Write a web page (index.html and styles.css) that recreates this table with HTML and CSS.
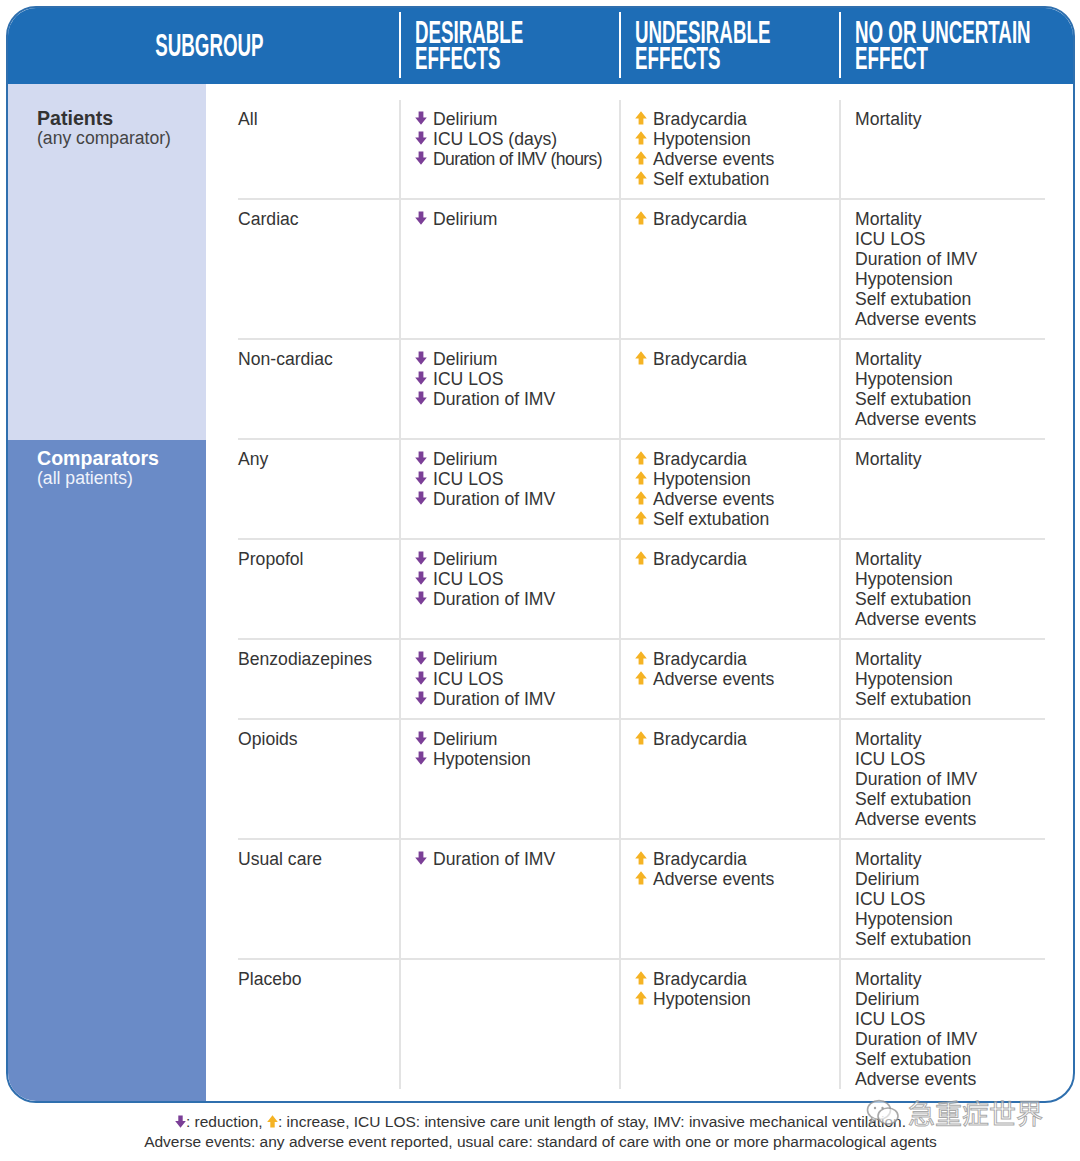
FILE: index.html
```html
<!DOCTYPE html>
<html lang="en">
<head>
<meta charset="utf-8">
<title>Subgroup effects</title>
<link rel="stylesheet" href="styles.css">
</head>
<body>
<svg class="defs" width="0" height="0" aria-hidden="true">
  <defs>
    <symbol id="dn" viewBox="0 0 12 14"><path d="M3.6 0.5h4.8v6h3.4L6 13.8 0.2 6.5h3.4z"/></symbol>
    <symbol id="up" viewBox="0 0 12 14"><path d="M6 0.2l5.8 7.3H8.4v6H3.6v-6H0.2z"/></symbol>
  </defs>
</svg>
<div class="page">
  <div class="table">
    <div class="head">
      <div class="hcell hsub"><span class="htxt hc">SUBGROUP</span></div>
      <div class="hcell"><span class="htxt">DESIRABLE</span><span class="htxt">EFFECTS</span></div>
      <div class="hcell"><span class="htxt">UNDESIRABLE</span><span class="htxt">EFFECTS</span></div>
      <div class="hcell"><span class="htxt">NO OR UNCERTAIN</span><span class="htxt">EFFECT</span></div>
    </div>

    <div class="group g-pat">
      <div class="glabel"><b>Patients</b><span>(any comparator)</span></div>
      <div class="rows">
        <div class="row">
          <div class="c sub">All</div>
          <div class="c">
            <div class="it"><svg class="ar dn"><use href="#dn"/></svg>Delirium</div>
            <div class="it"><svg class="ar dn"><use href="#dn"/></svg>ICU LOS (days)</div>
            <div class="it tight"><svg class="ar dn"><use href="#dn"/></svg>Duration of IMV (hours)</div>
          </div>
          <div class="c">
            <div class="it"><svg class="ar up"><use href="#up"/></svg>Bradycardia</div>
            <div class="it"><svg class="ar up"><use href="#up"/></svg>Hypotension</div>
            <div class="it"><svg class="ar up"><use href="#up"/></svg>Adverse events</div>
            <div class="it"><svg class="ar up"><use href="#up"/></svg>Self extubation</div>
          </div>
          <div class="c">
            <div>Mortality</div>
          </div>
        </div>
        <div class="row">
          <div class="c sub">Cardiac</div>
          <div class="c">
            <div class="it"><svg class="ar dn"><use href="#dn"/></svg>Delirium</div>
          </div>
          <div class="c">
            <div class="it"><svg class="ar up"><use href="#up"/></svg>Bradycardia</div>
          </div>
          <div class="c">
            <div>Mortality</div>
            <div>ICU LOS</div>
            <div>Duration of IMV</div>
            <div>Hypotension</div>
            <div>Self extubation</div>
            <div>Adverse events</div>
          </div>
        </div>
        <div class="row">
          <div class="c sub">Non-cardiac</div>
          <div class="c">
            <div class="it"><svg class="ar dn"><use href="#dn"/></svg>Delirium</div>
            <div class="it"><svg class="ar dn"><use href="#dn"/></svg>ICU LOS</div>
            <div class="it"><svg class="ar dn"><use href="#dn"/></svg>Duration of IMV</div>
          </div>
          <div class="c">
            <div class="it"><svg class="ar up"><use href="#up"/></svg>Bradycardia</div>
          </div>
          <div class="c">
            <div>Mortality</div>
            <div>Hypotension</div>
            <div>Self extubation</div>
            <div>Adverse events</div>
          </div>
        </div>
      </div>
    </div>

    <div class="group g-cmp">
      <div class="glabel"><b>Comparators</b><span>(all patients)</span></div>
      <div class="rows">
        <div class="row">
          <div class="c sub">Any</div>
          <div class="c">
            <div class="it"><svg class="ar dn"><use href="#dn"/></svg>Delirium</div>
            <div class="it"><svg class="ar dn"><use href="#dn"/></svg>ICU LOS</div>
            <div class="it"><svg class="ar dn"><use href="#dn"/></svg>Duration of IMV</div>
          </div>
          <div class="c">
            <div class="it"><svg class="ar up"><use href="#up"/></svg>Bradycardia</div>
            <div class="it"><svg class="ar up"><use href="#up"/></svg>Hypotension</div>
            <div class="it"><svg class="ar up"><use href="#up"/></svg>Adverse events</div>
            <div class="it"><svg class="ar up"><use href="#up"/></svg>Self extubation</div>
          </div>
          <div class="c">
            <div>Mortality</div>
          </div>
        </div>
        <div class="row">
          <div class="c sub">Propofol</div>
          <div class="c">
            <div class="it"><svg class="ar dn"><use href="#dn"/></svg>Delirium</div>
            <div class="it"><svg class="ar dn"><use href="#dn"/></svg>ICU LOS</div>
            <div class="it"><svg class="ar dn"><use href="#dn"/></svg>Duration of IMV</div>
          </div>
          <div class="c">
            <div class="it"><svg class="ar up"><use href="#up"/></svg>Bradycardia</div>
          </div>
          <div class="c">
            <div>Mortality</div>
            <div>Hypotension</div>
            <div>Self extubation</div>
            <div>Adverse events</div>
          </div>
        </div>
        <div class="row">
          <div class="c sub">Benzodiazepines</div>
          <div class="c">
            <div class="it"><svg class="ar dn"><use href="#dn"/></svg>Delirium</div>
            <div class="it"><svg class="ar dn"><use href="#dn"/></svg>ICU LOS</div>
            <div class="it"><svg class="ar dn"><use href="#dn"/></svg>Duration of IMV</div>
          </div>
          <div class="c">
            <div class="it"><svg class="ar up"><use href="#up"/></svg>Bradycardia</div>
            <div class="it"><svg class="ar up"><use href="#up"/></svg>Adverse events</div>
          </div>
          <div class="c">
            <div>Mortality</div>
            <div>Hypotension</div>
            <div>Self extubation</div>
          </div>
        </div>
        <div class="row">
          <div class="c sub">Opioids</div>
          <div class="c">
            <div class="it"><svg class="ar dn"><use href="#dn"/></svg>Delirium</div>
            <div class="it"><svg class="ar dn"><use href="#dn"/></svg>Hypotension</div>
          </div>
          <div class="c">
            <div class="it"><svg class="ar up"><use href="#up"/></svg>Bradycardia</div>
          </div>
          <div class="c">
            <div>Mortality</div>
            <div>ICU LOS</div>
            <div>Duration of IMV</div>
            <div>Self extubation</div>
            <div>Adverse events</div>
          </div>
        </div>
        <div class="row">
          <div class="c sub">Usual care</div>
          <div class="c">
            <div class="it"><svg class="ar dn"><use href="#dn"/></svg>Duration of IMV</div>
          </div>
          <div class="c">
            <div class="it"><svg class="ar up"><use href="#up"/></svg>Bradycardia</div>
            <div class="it"><svg class="ar up"><use href="#up"/></svg>Adverse events</div>
          </div>
          <div class="c">
            <div>Mortality</div>
            <div>Delirium</div>
            <div>ICU LOS</div>
            <div>Hypotension</div>
            <div>Self extubation</div>
          </div>
        </div>
        <div class="row">
          <div class="c sub">Placebo</div>
          <div class="c"></div>
          <div class="c">
            <div class="it"><svg class="ar up"><use href="#up"/></svg>Bradycardia</div>
            <div class="it"><svg class="ar up"><use href="#up"/></svg>Hypotension</div>
          </div>
          <div class="c">
            <div>Mortality</div>
            <div>Delirium</div>
            <div>ICU LOS</div>
            <div>Duration of IMV</div>
            <div>Self extubation</div>
            <div>Adverse events</div>
          </div>
        </div>
      </div>
    </div>
  </div>

  <div class="foot">
    <p><svg class="far dn"><use href="#dn"/></svg>: reduction, <svg class="far up"><use href="#up"/></svg>: increase, ICU LOS: intensive care unit length of stay, IMV: invasive mechanical ventilation.</p>
    <p>Adverse events: any adverse event reported, usual care: standard of care with one or more pharmacological agents</p>
  </div>

  <div class="wm">
    <svg class="wm-ico" viewBox="0 0 34 30" aria-hidden="true">
      <ellipse cx="13" cy="12" rx="11.5" ry="9.5"/>
      <path d="M6 19.5 4.5 25l5.5-3.4"/>
      <ellipse cx="22" cy="18" rx="10" ry="8"/>
      <circle cx="9" cy="10" r="1.2" class="dot"/>
      <circle cx="16.5" cy="10" r="1.2" class="dot"/>
    </svg>
    <span class="wm-txt">急重症世界</span>
  </div>
</div>
</body>
</html>
```

FILE: styles.css
```css
* {
  box-sizing: border-box;
  margin: 0;
  padding: 0;
}

body {
  margin: 0;
  background: #ffffff;
  font-family: "Liberation Sans", Arial, sans-serif;
  color: #333333;
}

.defs {
  position: absolute;
  width: 0;
  height: 0;
}

.page {
  position: relative;
  width: 1080px;
  padding: 6px 5px 0 6px;
}

.table {
  width: 1069px;
  border: 2px solid #2f6fae;
  border-radius: 30px;
  overflow: hidden;
  background: #ffffff;
}

/* header */
.head {
  display: grid;
  grid-template-columns: 391px 220px 220px 234px;
  background: #1e6db6;
  padding: 4px 0 6px;
}

.hcell {
  display: flex;
  flex-direction: column;
  align-items: flex-start;
  padding: 7px 0 7px 14px;
  border-left: 2px solid #ffffff;
  color: #ffffff;
  min-width: 0;
}

.hsub {
  border-left: none;
  align-items: center;
  justify-content: center;
  padding: 0 0 1px 12px;
}

.htxt {
  display: block;
  height: 26px;
  font-family: "Liberation Sans", Arial, sans-serif;
  font-weight: 700;
  font-size: 23px;
  line-height: 26px;
  white-space: nowrap;
  transform: scale(0.815, 1.33);
  transform-origin: left center;
}

.htxt.hc {
  transform-origin: center center;
}

/* groups */
.group {
  display: flex;
}

.glabel {
  width: 198px;
  flex: none;
  padding: 24px 0 0 29px;
  font-size: 17.6px;
  line-height: 20px;
}

.glabel b {
  display: block;
  font-size: 19.6px;
  font-weight: 700;
}

.glabel span {
  display: block;
}

.g-pat .glabel {
  background: #d3daf0;
  color: #333333;
}

.g-pat .glabel span {
  color: #444444;
}

.g-cmp .glabel {
  background: #6a8bc7;
  color: #ffffff;
  padding-top: 8px;
}

.g-cmp .glabel span {
  color: #f0f3fb;
}

.rows {
  flex: 1;
  min-width: 0;
  padding: 0 28px 0 32px;
}

.g-pat .rows {
  padding-top: 16px;
}

.g-cmp .rows {
  padding-bottom: 12px;
}

.row {
  display: grid;
  grid-template-columns: 161px 220px 220px 206px;
  border-bottom: 2px solid #e3e3e3;
}

.g-cmp .row:last-child {
  border-bottom: none;
}

.c {
  padding: 9px 0 9px 14px;
  border-left: 2px solid #e3e3e3;
  font-size: 17.6px;
  line-height: 20px;
  color: #353535;
  white-space: nowrap;
}

.g-cmp .row:last-child .c {
  padding-bottom: 0;
}

.c.sub {
  border-left: none;
  padding-left: 0;
}

.it {
  display: flex;
  align-items: center;
}

.it.tight {
  letter-spacing: -0.6px;
}

.ar {
  width: 12px;
  height: 14px;
  flex: none;
  margin-right: 6px;
  position: relative;
  top: -1px;
}

.dn {
  fill: #7b3f97;
}

.up {
  fill: #f5b324;
}

/* footnote */
.foot {
  margin-top: 9px;
  text-align: center;
  font-size: 15.5px;
  line-height: 20px;
  color: #333333;
}

.far {
  width: 11px;
  height: 13px;
  vertical-align: -1px;
}

/* watermark overlay */
.wm {
  position: absolute;
  left: 866px;
  top: 1096px;
  display: flex;
  align-items: center;
  gap: 8px;
  pointer-events: none;
}

.wm-ico {
  width: 34px;
  height: 30px;
  fill: rgba(255, 255, 255, 0.6);
  stroke: rgba(140, 140, 140, 0.75);
  stroke-width: 1.6;
}

.wm-ico .dot {
  fill: rgba(140, 140, 140, 0.8);
  stroke: none;
}

.wm-txt {
  font-family: "Noto Sans CJK SC", "Noto Sans CJK TC", sans-serif;
  font-size: 27px;
  line-height: 34px;
  color: rgba(255, 255, 255, 0.55);
  -webkit-text-stroke: 1px rgba(130, 130, 130, 0.7);
}
```
